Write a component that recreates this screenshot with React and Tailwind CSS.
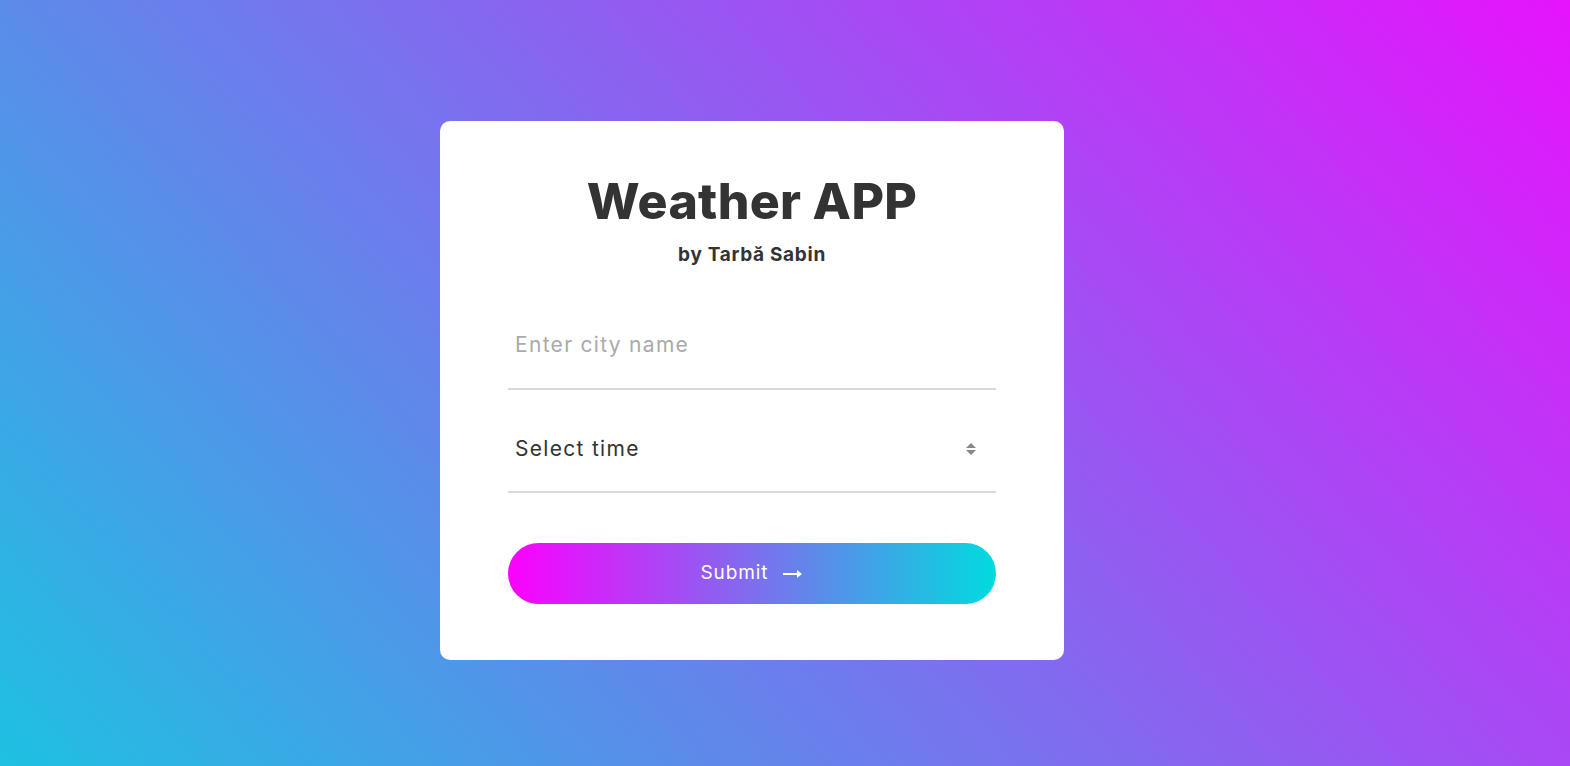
import { useState } from "react";

const App = () => {
  const [city, setCity] = useState("");
  const [time, setTime] = useState("");

  return (
    <div className="min-h-screen w-full flex items-center justify-center pt-[15px] pr-[66px] bg-[linear-gradient(48deg,#00dbde_-15%,#fc00ff_111%)] font-['Inter',sans-serif]">
      <div className="w-[624px] bg-white rounded-[10px] px-[68px] pt-[52px] pb-[56px]">
        {/* Heading */}
        <h1 className="text-center text-[50px] leading-[56px] font-extrabold tracking-[0.3px] text-[#333]">
          Weather APP
        </h1>
        <p className="mt-[14px] text-center text-[19px] leading-[24px] font-bold tracking-[0.7px] text-[#333]">
          by Tarbă Sabin
        </p>

        {/* City */}
        <input
          type="text"
          placeholder="Enter city name"
          value={city}
          onChange={(e) => setCity(e.target.value)}
          className="mt-[53px] block w-full h-[70px] pt-[10px] pb-[30px] px-[7px] text-[21px] tracking-[1.3px] text-[#333] placeholder:text-[#aaa] border-b-2 border-[#d9d9d9] outline-none"
        />

        {/* Time */}
        <div className="relative mt-[33px]">
          <select
            value={time}
            onChange={(e) => setTime(e.target.value)}
            className="appearance-none block w-full h-[70px] pt-[10px] pb-[30px] px-[7px] text-[21px] tracking-[1.3px] text-[#333] bg-white border-b-2 border-[#d9d9d9] outline-none"
          >
            <option value="">Select time</option>
            <option value="now">Now</option>
            <option value="tomorrow">Tomorrow</option>
          </select>
          <svg className="absolute right-[19px] top-[19px] pointer-events-none" width="12" height="14" viewBox="0 0 12 14">
            <path d="M6 1 L11 6 L1 6 Z" fill="#888" />
            <path d="M6 13 L11 8 L1 8 Z" fill="#888" />
          </svg>
        </div>

        {/* Submit */}
        <button
          type="button"
          className="mt-[50px] w-full h-[61px] rounded-full bg-[linear-gradient(to_right,#fc00ff,#00dbde)] text-white text-[19px] tracking-[0.9px] flex items-center justify-center gap-[15px]"
        >
          Submit
          <svg width="20" height="10" viewBox="0 0 20 10">
            <path d="M0 4 H14 V1 L19 5 L14 9 V6 H0 Z" fill="#fff" />
          </svg>
        </button>
      </div>
    </div>
  );
};

export default App;
